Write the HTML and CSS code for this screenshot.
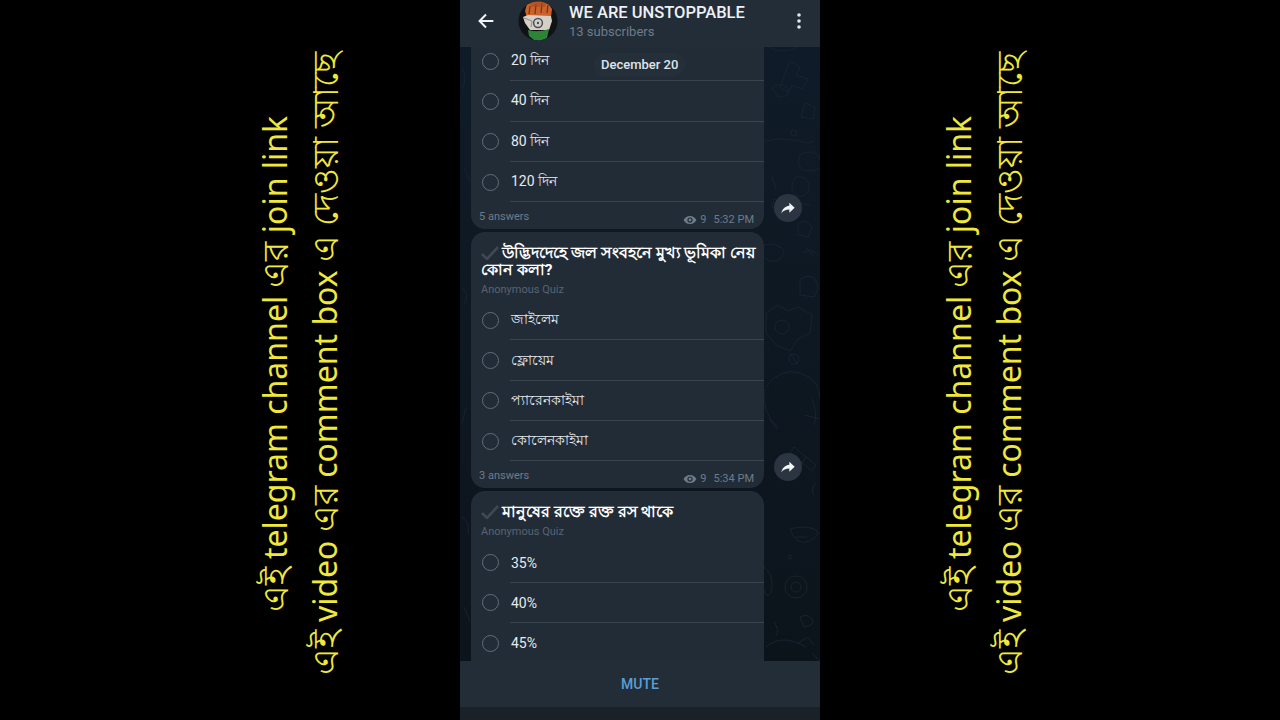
FILE: index.html
```html
<!DOCTYPE html>
<html lang="en">
<head>
    <meta charset="UTF-8">
    <meta name="viewport" content="width=device-width, initial-scale=1.0">
    <title>WE ARE UNSTOPPABLE</title>
    <link rel="stylesheet" href="styles.css">
</head>
<body>
    <div class="side side-left">
        <p class="side-text">
            <span class="line-one"><span class="bn">এই</span> telegram channel <span class="bn">এর</span> join link</span>
            <span class="line-two"><span class="bn">এই</span> video <span class="bn">এর</span> comment box <span class="bn">এ দেওয়া আছে</span></span>
        </p>
    </div>

    <div class="phone">
        <!-- Header -->
        <header class="top-bar">
            <svg class="back-icon" viewBox="0 0 24 24"><path d="M20 12H5M12 5l-7 7 7 7"/></svg>
            <svg class="avatar" viewBox="0 0 40 40">
                <defs><clipPath id="avatarClip"><circle cx="20" cy="20" r="19.500"/></clipPath></defs>
                <g clip-path="url(#avatarClip)">
                    <rect width="40" height="40" fill="#101216"/>
                    <path d="M9 3 14 1l8-1 8 2 4 6-1 8-24 1-2-7z" fill="#c9622b"/>
                    <path d="M11 13 12 5M17 13l1-10M23 12l1-10M29 12l1-8" stroke="#7c3415" stroke-width="1.300" fill="none"/>
                    <path d="M12 2l4-2 8 0 4 2-1 4-14 0z" fill="#a84a1e" opacity=".6"/>
                    <path d="M5 16l5-2 23 1 1 5-3 9-19 0-5-7z" fill="#d5d0c6"/>
                    <path d="M6 17l8 3-1 6" stroke="#8d8a85" stroke-width="1" fill="none"/>
                    <circle cx="20" cy="22" r="4.400" fill="none" stroke="#4a4d5e" stroke-width="1.500"/>
                    <circle cx="20" cy="22" r="1.200" fill="#4a4d5e"/>
                    <path d="M10 29q10 3 21-1l-2 9-7 3-6-1-5-4z" fill="#2d8436"/>
                </g>
            </svg>
            <div class="channel-info">
                <div class="channel-name">WE ARE UNSTOPPABLE</div>
                <div class="channel-subs">13 subscribers</div>
            </div>
            <svg class="menu-icon" viewBox="0 0 4 18"><circle cx="2" cy="3" r="1.800"/><circle cx="2" cy="9" r="1.800"/><circle cx="2" cy="15" r="1.800"/></svg>
        </header>

        <!-- Chat -->
        <main class="chat">
            <svg class="doodles" viewBox="0 0 360 614">
                <path d="M308 0q14 8 30 0M330 14l10 6-4 8 12 4-6 10-10-4-4 8-8-6z"/>
                <path d="M312 40q12-6 16 2t-10 8zM345 56l10 4-2 12-12-2z"/>
                <circle cx="334" cy="86" r="3"/>
                <path d="M306 94q14-4 30 0M304 92l4 6M336 92q10 6 18 2M340 108q14-8 20 4t-12 12q-14-2-8-16z"/>
                <path d="M335 130q12-2 14 8t-10 12q-12-4-4-20zM312 130l4 12M338 156l12 2"/>
                <path d="M314 152l-2 8 6 2 2-8zM338 176l8-2 6 6-4 10-10-2z"/>
                <path d="M300 200q10-6 20 0t-4 14q-14 2-16-14zM345 200l8 8"/>
                <path d="M344 206q8-6 14 2M340 232q12-6 16 2t-2 16l-14-2z"/>
                <path d="M306 266l12-8 10 6 10-4 14 8-2 18-12 6-8 12-14-6-10-12z"/>
                <circle cx="322" cy="280" r="7"/>
                <circle cx="334" cy="312" r="5"/><path d="M330 306l8 12"/>
                <path d="M306 340q14-20 34-14t20 26M304 342q-2 26 14 38M352 352q6 14 2 26"/>
                <path d="M309 372l8 10M345 368l14 4"/>
                <path d="M334 400l12 10-4 6-12-10zM346 410l10 8-4 6-10-8z"/>
                <path d="M322 430l4 4M356 436q-6 6-2 12"/>
                <path d="M330 482q14-4 24 0t-4 12q-14 6-20-12zM335 490l12 0"/>
                <path d="M304 520q8 6 8 18t-6 10q-6-12-2-28z"/>
                <circle cx="336" cy="540" r="11"/><circle cx="336" cy="540" r="5"/><circle cx="330" cy="510" r="2"/>
                <path d="M314 575q6 8 2 14M340 570q8-4 12 2t-8 8z"/>
                <path d="M306 600q16-14 40 0M338 596l10-6 6 8M352 606l8 8"/>
                <path d="M2 20q6 10 0 22M4 120l6 14M2 240q8 8 2 18M6 360l-4 16M2 470q8 4 6 16M4 560l6 14"/>
            </svg>
            <div class="date-pill">December 20</div>

            <div class="message first">
                <div class="bubble">
                    <div class="option"><span class="radio"></span><span class="option-label">20 দিন</span></div>
                    <div class="option"><span class="radio"></span><span class="option-label">40 দিন</span></div>
                    <div class="option"><span class="radio"></span><span class="option-label">80 দিন</span></div>
                    <div class="option"><span class="radio"></span><span class="option-label">120 দিন</span></div>
                    <div class="bubble-foot">
                        <span class="answers">5 answers</span>
                        <span class="meta">
                            <svg class="eye-icon" viewBox="0 0 24 24"><path d="M12 5C7 5 2.700 8.100 1 12c1.700 3.900 6 7 11 7s9.300-3.100 11-7c-1.700-3.900-6-7-11-7zm0 11.500a4.500 4.500 0 1 1 0-9 4.500 4.500 0 0 1 0 9zm0-7a2.500 2.500 0 1 0 0 5 2.500 2.500 0 0 0 0-5z"/></svg>
                            9 <span class="time">5:32 PM</span>
                        </span>
                    </div>
                </div>
                <div class="share"><svg viewBox="0 0 24 24"><path d="M14 8.500V4l8 7.500-8 7.500v-4.600c-5.500 0-9.200 1.700-12 5.600C3.200 14.500 6.500 9.500 14 8.500z"/></svg></div>
            </div>

            <div class="message">
                <div class="bubble">
                    <div class="question"><svg class="check-icon" viewBox="0 0 18 14"><path d="M1 8l5 5L17 1"/></svg>উদ্ভিদদেহে জল সংবহনে মুখ্য ভূমিকা নেয় কোন কলা?</div>
                    <div class="quiz-type">Anonymous Quiz</div>
                    <div class="option"><span class="radio"></span><span class="option-label">জাইলেম</span></div>
                    <div class="option"><span class="radio"></span><span class="option-label">ফ্লোয়েম</span></div>
                    <div class="option"><span class="radio"></span><span class="option-label">প্যারেনকাইমা</span></div>
                    <div class="option"><span class="radio"></span><span class="option-label">কোলেনকাইমা</span></div>
                    <div class="bubble-foot">
                        <span class="answers">3 answers</span>
                        <span class="meta">
                            <svg class="eye-icon" viewBox="0 0 24 24"><path d="M12 5C7 5 2.700 8.100 1 12c1.700 3.900 6 7 11 7s9.300-3.100 11-7c-1.700-3.900-6-7-11-7zm0 11.500a4.500 4.500 0 1 1 0-9 4.500 4.500 0 0 1 0 9zm0-7a2.500 2.500 0 1 0 0 5 2.500 2.500 0 0 0 0-5z"/></svg>
                            9 <span class="time">5:34 PM</span>
                        </span>
                    </div>
                </div>
                <div class="share"><svg viewBox="0 0 24 24"><path d="M14 8.500V4l8 7.500-8 7.500v-4.600c-5.500 0-9.200 1.700-12 5.600C3.200 14.500 6.500 9.500 14 8.500z"/></svg></div>
            </div>

            <div class="message last">
                <div class="bubble">
                    <div class="question"><svg class="check-icon" viewBox="0 0 18 14"><path d="M1 8l5 5L17 1"/></svg>মানুষের রক্তে রক্ত রস থাকে</div>
                    <div class="quiz-type">Anonymous Quiz</div>
                    <div class="option"><span class="radio"></span><span class="option-label">35%</span></div>
                    <div class="option"><span class="radio"></span><span class="option-label">40%</span></div>
                    <div class="option"><span class="radio"></span><span class="option-label">45%</span></div>
                </div>
            </div>
        </main>

        <!-- Bottom -->
        <div class="mute-bar">MUTE</div>
        <div class="nav-strip"></div>
    </div>

    <div class="side side-right">
        <p class="side-text">
            <span class="line-one"><span class="bn">এই</span> telegram channel <span class="bn">এর</span> join link</span>
            <span class="line-two"><span class="bn">এই</span> video <span class="bn">এর</span> comment box <span class="bn">এ দেওয়া আছে</span></span>
        </p>
    </div>
</body>
</html>
```

FILE: styles.css
```css
* {
    padding: 0px;
    margin: 0px;
    box-sizing: border-box;
}
body {
    background-color: #000;
    font-family: "Roboto", "Noto Sans", sans-serif;
    display: flex;
    height: 100vh;
    overflow: hidden;
}

/* SIDE TEXT */
.side {
    width: 460px;
    flex-shrink: 0;
    display: flex;
    align-items: center;
    padding-top: 8px;
}
.side-left {
    justify-content: flex-end;
    padding-right: 115px;
}
.side-right {
    justify-content: flex-start;
    padding-left: 119px;
}
.side-text {
    writing-mode: vertical-rl;
    transform: rotate(180deg);
    display: flex;
    flex-direction: column;
    align-items: center;
    gap: 10px;
    color: #f0e83c;
    font-family: "Noto Sans", sans-serif;
    font-size: 32px;
    line-height: 40px;
    white-space: nowrap;
}
.side-text .bn {
    font-size: 34.5px;
}

/* PHONE */
.phone {
    width: 360px;
    flex-shrink: 0;
    display: flex;
    flex-direction: column;
    background-color: #232d38;
}
.top-bar {
    height: 47px;
    flex-shrink: 0;
    display: flex;
    align-items: center;
    padding: 0px 19px 6px 15px;
    background-color: #232d38;
    z-index: 2;
}
.back-icon {
    width: 22px;
    height: 22px;
    fill: none;
    stroke: #f2f5f7;
    stroke-width: 2.2;
}
.avatar {
    width: 40px;
    height: 40px;
    margin-left: 21px;
}
.channel-info {
    flex: 1;
    margin-left: 11px;
    margin-top: 2px;
}
.channel-name {
    color: #eef1f4;
    font-size: 16.5px;
    font-weight: 500;
    line-height: 20px;
}
.channel-subs {
    color: #6e7c8a;
    font-size: 13px;
    line-height: 18px;
}
.menu-icon {
    width: 4px;
    height: 18px;
    fill: #e4e8ec;
}

/* CHAT */
.chat {
    position: relative;
    flex: 1;
    min-height: 0;
    overflow: hidden;
    padding: 0px 0px 0px 11px;
    display: flex;
    flex-direction: column;
    gap: 2.5px;
    background: linear-gradient(#101b29, #0e1822 45%, #0c141b);
}
.doodles {
    position: absolute;
    left: 0px;
    top: 0px;
    width: 360px;
    height: 614px;
    fill: none;
    stroke: #182330;
    stroke-width: 1;
}
.date-pill {
    position: absolute;
    left: 134px;
    top: 6px;
    padding: 3px 7px;
    border-radius: 12px;
    background-color: #252f3a;
    color: #dfe4e9;
    font-size: 13px;
    font-weight: 500;
    line-height: 17px;
    z-index: 1;
}
.message {
    position: relative;
    display: flex;
    align-items: flex-end;
    flex-shrink: 0;
}
.message.first {
    margin-top: -6px;
}
.bubble {
    width: 293px;
    padding-top: 13px;
    border-radius: 14px;
    background-color: #222c37;
}
.message.first .bubble {
    padding-top: 0px;
    border-radius: 0px 0px 14px 14px;
}
.message.last .bubble {
    padding-bottom: 30px;
}
.question {
    padding: 0px 4px 0px 10px;
    color: #fff;
    font-size: 15.5px;
    font-weight: 700;
    line-height: 17px;
}
.check-icon {
    width: 18px;
    height: 14px;
    margin-right: 3px;
    vertical-align: -2px;
    fill: none;
    stroke: #3f4954;
    stroke-width: 2.6;
}
.quiz-type {
    padding: 3px 10px 2.5px;
    color: #566472;
    font-size: 11px;
    line-height: 16px;
}
.option {
    position: relative;
    height: 40.3px;
    display: flex;
    align-items: center;
    padding-left: 11px;
    color: #e6eaee;
    font-size: 14px;
}
.option::after {
    content: "";
    position: absolute;
    left: 39px;
    right: 0px;
    bottom: 0px;
    height: 1px;
    background-color: #39444f;
}
.radio {
    width: 17px;
    height: 17px;
    border: 1px solid #5f6d7a;
    border-radius: 50%;
}
.option-label {
    margin-left: 12px;
}
.bubble-foot {
    height: 27px;
    display: flex;
    justify-content: space-between;
    padding: 8px 10px 0px 8px;
    color: #6e7c8a;
    font-size: 11px;
    line-height: 14px;
}
.meta {
    display: flex;
    align-items: center;
    height: 14px;
    margin-top: 3px;
    gap: 3px;
}
.time {
    margin-left: 4px;
}
.eye-icon {
    width: 14px;
    height: 14px;
    fill: #6e7c8a;
}
.share {
    width: 28px;
    height: 28px;
    margin: 0px 0px 7px 10px;
    border-radius: 50%;
    background-color: #2a3541;
    display: flex;
    justify-content: center;
    align-items: center;
    z-index: 1;
}
.share svg {
    width: 16px;
    height: 16px;
    fill: #f2f5f7;
}

/* BOTTOM */
.mute-bar {
    height: 46px;
    flex-shrink: 0;
    display: flex;
    justify-content: center;
    align-items: center;
    background-color: #232d38;
    color: #5a9fd6;
    font-size: 14px;
    font-weight: 500;
    z-index: 2;
}
.nav-strip {
    height: 13px;
    flex-shrink: 0;
    background-color: #1a2128;
    z-index: 2;
}
```
